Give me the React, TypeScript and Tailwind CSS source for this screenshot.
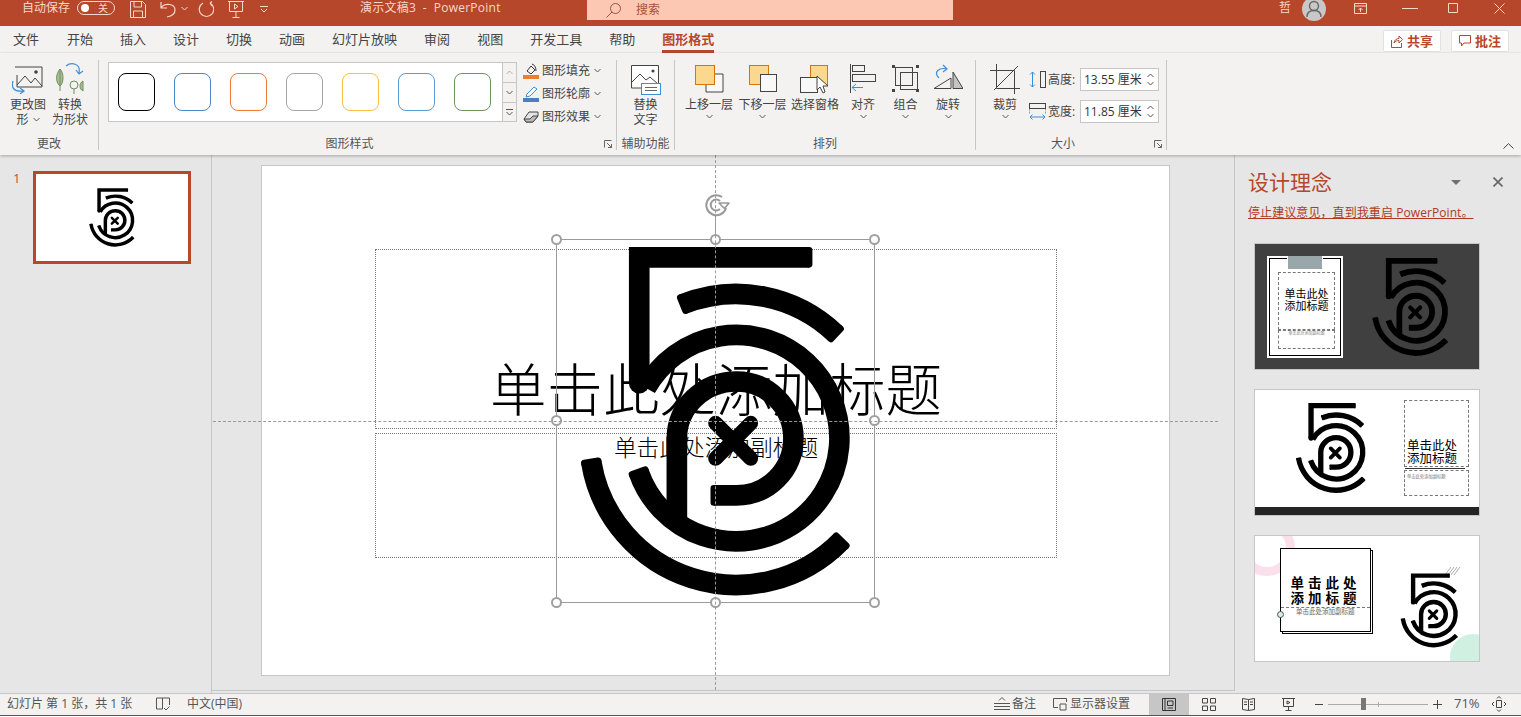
import type { ReactNode } from 'react';

const CX = 589;
const CY = 745;
const HALF = 31; // half stroke of the logo
const R = 10; // corner radius at the stroke ends

const polar = (r: number, deg: number) => {
  const a = (deg * Math.PI) / 180;
  return `${(CX + r * Math.cos(a)).toFixed(1)} ${(CY + r * Math.sin(a)).toFixed(1)}`;
};

function arc(r: number, a0: number, a1: number, trimStart: number, trimEnd: number) {
  const s = a0 + (trimStart / r) * (180 / Math.PI);
  const e = a1 - (trimEnd / r) * (180 / Math.PI);
  return `M${polar(r, s)} A${r} ${r} 0 ${e - s > 180 ? 1 : 0} 1 ${polar(r, e)}`;
}

// short radial line with round caps, squares the stroke end off with soft corners
function tip(r: number, a: number, inward: number) {
  const d = a + (inward / r) * (180 / Math.PI);
  return `M${polar(r - HALF + R, d)} L${polar(r + HALF - R, d)}`;
}

function Logo({ className }: { className?: string }) {
  return (
    <svg viewBox="100 150 860 1090" className={className} fill="none" stroke="currentColor">
      <g strokeWidth="62">
        <path d={`M${818 - R} 202 H298 V580`} />
        <path d={`M411 990 V745 A179 171 0 0 1 590 575 A171 171 0 0 1 590 917 L${512 + R} 917`} />
        <path d={arc(433, -113, -45, R, R)} />
        <path d={arc(310, -151, 162.7, 0, R)} />
        <path d={arc(441, 43, 172, R, R)} />
      </g>
      <g strokeWidth={R * 2} strokeLinecap="round">
        <path d={`M${818 - R} ${202 - HALF + R} V${202 + HALF - R}`} />
        <path d={`M${512 + R} ${917 - HALF + R} V${917 + HALF - R}`} />
        <path d={tip(433, -113, R)} />
        <path d={tip(433, -45, -R)} />
        <path d={tip(310, 162.7, -R)} />
        <path d={tip(441, 43, R)} />
        <path d={tip(441, 172, -R)} />
      </g>
      <circle cx="298" cy="580" r="31" fill="currentColor" stroke="none" />
      <path d="M527 700 L633 806 M633 700 L527 806" strokeWidth="44" strokeLinecap="round" />
    </svg>
  );
}

function Chevron({ className = '' }: { className?: string }) {
  return (
    <svg width="7" height="5" viewBox="0 0 7 5" className={className} fill="none" stroke="#555" strokeWidth="1">
      <path d="M0.5 1 L3.5 4 L6.5 1" />
    </svg>
  );
}

function Launcher({ className = '' }: { className?: string }) {
  return (
    <svg width="8" height="8" viewBox="0 0 8 8" className={className} fill="none" stroke="#666" strokeWidth="1">
      <path d="M0.5 7.5 V0.5 H7.5 M3 3 L7.5 7.5 M7.5 4 V7.5 H4" />
    </svg>
  );
}

function TitleBar() {
  return (
    <div className="flex h-[26px] shrink-0 items-start overflow-hidden bg-[#b7472a] text-[12px] leading-[16px] text-[#f6d8cd]">
      <span className="ml-[22px] w-[48px] whitespace-nowrap">自动保存</span>
      <div className="ml-[7px] mt-[1px] flex h-[14px] w-[38px] items-center justify-between rounded-full border border-[#f6d8cd] pl-[3px] pr-[6px]">
        <span className="h-[8px] w-[8px] rounded-full bg-white" />
        <span className="text-[10px] leading-none">关</span>
      </div>
      <svg width="16" height="17" viewBox="0 0 16 17" className="ml-[15px] mt-[1px]" fill="none" stroke="#f6d8cd">
        <path d="M0.5 0.5 H12.5 L15.5 3.5 V16.5 H0.5 Z M4 0.5 V6 H11.5 V0.5 M3.5 16.5 V10 H12.5 V16.5" />
      </svg>
      <svg width="16" height="17" viewBox="0 0 16 17" className="ml-[14px] mt-[1px]" fill="none" stroke="#f6d8cd" strokeWidth="1.2">
        <path d="M1 1 V7 H7 M1 7 C4 2 15 2 15 9 C15 12 12 15 7 16" />
      </svg>
      <Chevron className="ml-[5px] mt-[6px] [&>path]:stroke-[#f6d8cd]" />
      <svg width="16" height="17" viewBox="0 0 16 17" className="ml-[10px] mt-[1px]" fill="none" stroke="#f6d8cd" strokeWidth="1.2">
        <path d="M12 2 A7.2 7.2 0 1 1 5 2 M12 2 L14 0.5 M12 2 L14 5" />
      </svg>
      <svg width="16" height="17" viewBox="0 0 16 17" className="ml-[14px] mt-[1px]" fill="none" stroke="#f6d8cd">
        <path d="M0 0.5 H16 M1.5 0.5 V10.5 H14.5 V0.5 M8 10.5 V16 M4.5 16.5 H11.5" />
        <path d="M6.5 3 L10 5.5 L6.5 8 Z" />
      </svg>
      <svg width="8" height="7" viewBox="0 0 8 7" className="ml-[16px] mt-[6px]" fill="none" stroke="#f6d8cd">
        <path d="M0 0.5 H8 M1 3 L4 6 L7 3" />
      </svg>
      <span className="ml-[92px] w-[141px] whitespace-pre tracking-[0.25px]">演示文稿3  -  PowerPoint</span>
      <div className="ml-[86px] flex h-[20px] w-[366px] items-center bg-[#fcc8b4] text-[#a5503a]">
        <svg width="15" height="15" viewBox="0 0 15 15" className="ml-[19px]" fill="none" stroke="#a5503a">
          <circle cx="9.5" cy="5.5" r="5" />
          <path d="M6 9 L0.5 14.5" />
        </svg>
        <span className="ml-[15px]">搜索</span>
      </div>
      <span className="ml-[326px] w-[12px]">哲</span>
      <div className="ml-[11px] -mt-[3px] flex h-[24px] w-[24px] items-center justify-center rounded-full bg-[#c8c8c8]">
        <svg width="16" height="18" viewBox="0 0 16 18" fill="none" stroke="#666" strokeWidth="1.4">
          <circle cx="8" cy="6" r="4.5" />
          <path d="M1 17 C1 12 4 10.5 8 10.5 C12 10.5 15 12 15 17" />
        </svg>
      </div>
      <svg width="13" height="11" viewBox="0 0 13 11" className="ml-[28px] mt-[3px]" fill="none" stroke="#f6d8cd">
        <path d="M0.5 0.5 H12.5 V10.5 H0.5 Z M0.5 3 H12.5 M6.5 9 V5 M4.5 7 L6.5 5 L8.5 7" />
      </svg>
      <svg width="16" height="1" viewBox="0 0 16 1" className="ml-[35px] mt-[8px]" stroke="#f6d8cd">
        <path d="M0 0.5 H16" />
      </svg>
      <svg width="10" height="10" viewBox="0 0 10 10" className="ml-[30px] mt-[3px]" fill="none" stroke="#f6d8cd">
        <path d="M0.5 0.5 H9.5 V9.5 H0.5 Z" />
      </svg>
      <svg width="11" height="11" viewBox="0 0 11 11" className="ml-[36px] mt-[3px]" fill="none" stroke="#f6d8cd">
        <path d="M0.5 0.5 L10.5 10.5 M10.5 0.5 L0.5 10.5" />
      </svg>
    </div>
  );
}

const tabs = ['文件', '开始', '插入', '设计', '切换', '动画', '幻灯片放映', '审阅', '视图', '开发工具', '帮助'];

function TabRow() {
  return (
    <div className="flex h-[27px] shrink-0 items-start justify-between bg-[#f3f2f1] pl-[13px] pr-[12px] text-[13px] leading-[21px] text-[#444]">
      <div className="flex gap-[27px]">
        {tabs.map((t, i) => (
          <span key={t} className={`h-[27px] whitespace-nowrap border-b-[3px] border-transparent pt-[3px] ${i === 0 ? 'mr-px' : ''}`}>
            {t}
          </span>
        ))}
        <span className="h-[27px] whitespace-nowrap border-b-[3px] border-[#b7472a] pt-[3px] font-bold text-[#b7472a]">图形格式</span>
      </div>
      <div className="mt-[4px] flex gap-[10px] text-[13px] font-bold text-[#b7472a]">
        <button className="flex h-[22px] w-[58px] items-center justify-center gap-[4px] rounded-[2px] border border-[#e4e2e0] bg-white">
          <svg width="12" height="13" viewBox="0 0 12 13" fill="none" stroke="#b7472a">
            <path d="M0.5 5 V12.5 H10.5 V8 M3 8 C3 5 6 3.5 8 3.5 V1 L11.5 4.5 L8 8 V5.5 C6 5.5 4.5 6 3 8 Z" />
          </svg>
          共享
        </button>
        <button className="flex h-[22px] w-[58px] items-center justify-center gap-[4px] rounded-[2px] border border-[#e4e2e0] bg-white">
          <svg width="12" height="12" viewBox="0 0 12 12" fill="none" stroke="#b7472a">
            <path d="M0.5 0.5 H11.5 V8 H5 L2.5 11 V8 H0.5 Z" />
          </svg>
          批注
        </button>
      </div>
    </div>
  );
}

function Group({ width, label, children, launcher }: { width: string; label: string; children: ReactNode; launcher?: boolean }) {
  return (
    <div className={`relative flex h-[90px] shrink-0 flex-col border-r border-[#c6c6c6] ${width}`}>
      <div className="flex flex-1">{children}</div>
      <div className={`h-[18px] pt-[4px] text-center text-[12px] leading-[15px] text-[#555] ${launcher ? 'pr-[16px]' : ''}`}>{label}</div>
      {launcher && <Launcher className="absolute bottom-[2px] right-[4px]" />}
    </div>
  );
}

function RibbonButton({ width, icon, lines, caret }: { width: string; icon: ReactNode; lines: ReactNode[]; caret?: boolean }) {
  return (
    <div className={`flex shrink-0 flex-col items-center text-[12px] leading-[15px] text-[#444] ${width}`}>
      <div className="flex h-[37px] items-center justify-center">{icon}</div>
      {lines.map((l, i) => (
        <span key={i} className="flex items-center whitespace-nowrap">
          {l}
        </span>
      ))}
      {caret && <Chevron className="mt-[2px]" />}
    </div>
  );
}

const swatches = [
  'border-black',
  'border-[#4a86c8]',
  'border-[#ed7d31]',
  'border-[#a5a5a5]',
  'border-[#fbbf40]',
  'border-[#5b9bd5]',
  'border-[#6f9460]',
];

function StyleCommand({ icon, label }: { icon: ReactNode; label: string }) {
  return (
    <div className="flex h-[23px] items-center text-[12px] text-[#444]">
      <span className="flex w-[19px] justify-start">{icon}</span>
      <span className="whitespace-nowrap">{label}</span>
      <Chevron className="ml-[4px]" />
    </div>
  );
}

function PairIcon({ under }: { under: boolean }) {
  const back = <path d="M15 10 H30 V28 H13 V10" fill="#f8f8f8" stroke="#444" />;
  const front = <rect x="2.5" y="1.5" width="19" height="19" fill="#fad98f" stroke="#d9730d" />;
  return (
    <svg width="32" height="30" viewBox="0 0 32 30">
      {under ? front : back}
      {under ? <rect x="13.5" y="10.5" width="16" height="17" fill="#f8f8f8" stroke="#444" /> : front}
    </svg>
  );
}

function Ribbon() {
  return (
    <div className="relative z-10 flex h-[102px] shrink-0 bg-[#f3f2f1] pt-[7px] shadow-[0_1px_3px_rgba(0,0,0,0.28)]">
      <Group width="w-[99px]" label="更改">
        <div className="flex pl-[7px]">
          <RibbonButton
            width="w-[42px]"
            lines={['更改图', <>形 <Chevron className="ml-[4px]" /></>]}
            icon={
              <svg width="32" height="28" viewBox="0 0 32 28" fill="none" className="mt-[2px]">
                <path d="M3 1 H30 V21 H5 V9" stroke="#444" />
                <path d="M5 19 L13 10 L19 17 L23 12 L30 20" stroke="#444" />
                <circle cx="24" cy="6" r="1.8" fill="#444" />
                <path d="M1 15 C-1 22 2 26 11 25 M8 22 L12 25 L8 28" stroke="#3b8fd9" strokeWidth="1.2" />
              </svg>
            }
          />
          <RibbonButton
            width="w-[42px]"
            lines={['转换', '为形状']}
            icon={
              <svg width="30" height="32" viewBox="0 0 30 32" fill="none">
                <path d="M5 6 C0 12 1 20 5 23 C9 20 9 10 5 6 Z M5 6 V28" stroke="#6f8f5c" fill="#a9bc9a" />
                <circle cx="19" cy="22" r="4" stroke="#6f8f5c" />
                <path d="M19 26 V31 M28 18 V28 C24 26 24 20 28 18 Z" stroke="#6f8f5c" fill="#a9bc9a" />
                <path d="M11 3 C16 -1 26 0 24 10 M21 7 L24 11 L28 8" stroke="#3b8fd9" strokeWidth="1.2" />
              </svg>
            }
          />
        </div>
      </Group>

      <Group width="w-[518px]" label="图形样式" launcher>
        <div className="ml-[9px] mt-[2px] flex h-[60px] w-[409px] border border-[#c6c6c6] bg-white">
          <div className="flex flex-1 gap-[19px] pl-[9px] pt-[10px]">
            {swatches.map(c => (
              <div key={c} className={`h-[38px] w-[37px] rounded-[8px] border ${c}`} />
            ))}
          </div>
          <div className="flex w-[14px] flex-col border-l border-[#c6c6c6] bg-[#f3f2f1]">
            <div className="flex h-[20px] items-center justify-center border-b border-[#c6c6c6]">
              <Chevron className="rotate-180 opacity-40" />
            </div>
            <div className="flex h-[20px] items-center justify-center border-b border-[#c6c6c6]">
              <Chevron />
            </div>
            <div className="flex flex-1 flex-col items-center justify-center">
              <span className="h-px w-[7px] bg-[#555]" />
              <Chevron className="mt-px" />
            </div>
          </div>
        </div>
        <div className="ml-[6px] -mt-[1px] flex flex-col">
          <StyleCommand
            label="图形填充"
            icon={
              <svg width="16" height="16" viewBox="0 0 16 16" fill="none">
                <path d="M4 8 L8 3 L12 7 L8 11 Z M9 1 C12 2 13 5 13 8" stroke="#333" />
                <rect y="12" width="16" height="4" fill="#ed7d31" />
              </svg>
            }
          />
          <StyleCommand
            label="图形轮廓"
            icon={
              <svg width="16" height="16" viewBox="0 0 16 16" fill="none">
                <path d="M3 11 L4 8 L11 1 L14 3 L7 10 Z" stroke="#3b8fd9" fill="#fff" />
                <rect y="12" width="16" height="4" fill="#4a7fc0" />
              </svg>
            }
          />
          <StyleCommand
            label="图形效果"
            icon={
              <svg width="16" height="14" viewBox="0 0 16 14" fill="none" stroke="#444">
                <path d="M1 9 L6 2 H15 L15 6 L10 12 H3 Z" fill="#e4e4e4" />
                <path d="M1 9 L3 12 H10 L15 6 L10 6 L7 9 Z" fill="#bbb" />
              </svg>
            }
          />
        </div>
      </Group>

      <Group width="w-[58px]" label="辅助功能">
        <RibbonButton
          width="w-full"
          lines={['替换', '文字']}
          icon={
            <svg width="30" height="30" viewBox="0 0 30 30" fill="none" className="mt-[3px]">
              <path d="M0.5 0.5 H27.5 V23 H0.5 Z" stroke="#444" fill="#fff" />
              <path d="M1 17 L9 9 L15 15 L19 12 L27 19" stroke="#444" />
              <circle cx="22" cy="6" r="1.6" fill="#444" />
              <rect x="10.5" y="18.5" width="19" height="11" fill="#fff" stroke="#3b8fd9" />
              <path d="M14 22.5 H26 M14 25.5 H26" stroke="#666" />
            </svg>
          }
        />
      </Group>

      <Group width="w-[301px]" label="排列">
        <div className="flex pl-[7px]">
          <RibbonButton width="w-[54px]" lines={['上移一层']} caret icon={<PairIcon under={false} />} />
          <RibbonButton width="w-[53px]" lines={['下移一层']} caret icon={<PairIcon under />} />
          <RibbonButton
            width="w-[52px]"
            lines={['选择窗格']}
            icon={
              <svg width="32" height="30" viewBox="0 0 32 30">
                <rect x="11.5" y="1.5" width="17" height="20" fill="#fad98f" stroke="#d9730d" />
                <rect x="1.5" y="13.5" width="17" height="15" fill="#f8f8f8" stroke="#444" />
                <path d="M18 12 V26 L21 23 L24 29 L26 28 L24 22 H29 Z" fill="#fff" stroke="#444" />
              </svg>
            }
          />
          <RibbonButton
            width="w-[44px]"
            lines={['对齐']}
            caret
            icon={
              <svg width="28" height="30" viewBox="0 0 28 30" fill="none" stroke="#444">
                <path d="M1.5 0 V29" />
                <rect x="3.5" y="1.5" width="12" height="6" />
                <rect x="3.5" y="10.5" width="23" height="7" />
                <path d="M14 23.5 H3 M7 20 L3 23.5 L7 27" stroke="#3b8fd9" />
              </svg>
            }
          />
          <RibbonButton
            width="w-[41px]"
            lines={['组合']}
            caret
            icon={
              <svg width="28" height="30" viewBox="0 0 28 30" fill="none" stroke="#444">
                <rect x="3.5" y="3.5" width="17" height="18" />
                <rect x="8.5" y="8.5" width="17" height="17" />
                <g fill="#444" stroke="none">
                  <rect x="0" y="1" width="3" height="3" />
                  <rect x="24" y="1" width="3" height="3" />
                  <rect x="0" y="25" width="3" height="3" />
                  <rect x="24" y="25" width="3" height="3" />
                </g>
              </svg>
            }
          />
          <RibbonButton
            width="w-[44px]"
            lines={['旋转']}
            caret
            icon={
              <svg width="30" height="30" viewBox="0 0 30 30" fill="none">
                <path d="M1 24.5 L18 14 V24.5 Z" stroke="#444" />
                <path d="M20 8 L30 24.5 H20 Z" fill="#c4c4c4" stroke="#444" />
                <path d="M6 14 C0 8 6 3 14 5 M10 1 L14 5 L10 8" stroke="#3b8fd9" strokeWidth="1.2" />
              </svg>
            }
          />
        </div>
      </Group>

      <Group width="w-[191px]" label="大小" launcher>
        <div className="flex pl-[7px]">
          <RibbonButton
            width="w-[44px]"
            lines={['裁剪']}
            caret
            icon={
              <svg width="30" height="30" viewBox="0 0 30 30" fill="none" stroke="#444">
                <path d="M6.5 0 V24.5 H30 M0 6.5 H24.5 V30 M4 26 L28 2" />
              </svg>
            }
          />
          <div className="ml-[2px] mt-[8px] flex flex-col gap-[9px]">
            <SizeRow
              label="高度:"
              value="13.55 厘米"
              icon={
                <svg width="17" height="17" viewBox="0 0 17 17" fill="none">
                  <rect x="11.5" y="0.5" width="5" height="16" stroke="#444" />
                  <path d="M3.5 1 V16 M1 3.5 L3.5 1 L6 3.5 M1 13.5 L3.5 16 L6 13.5" stroke="#3b8fd9" />
                </svg>
              }
            />
            <SizeRow
              label="宽度:"
              value="11.85 厘米"
              icon={
                <svg width="17" height="17" viewBox="0 0 17 17" fill="none">
                  <rect x="0.5" y="0.5" width="16" height="5" stroke="#444" />
                  <path d="M0 5.5 V11 M17 5.5 V11" stroke="#444" strokeDasharray="2 1" />
                  <path d="M1 14 H16 M3.5 11.5 L1 14 L3.5 16.5 M13.5 11.5 L16 14 L13.5 16.5" stroke="#3b8fd9" />
                </svg>
              }
            />
          </div>
        </div>
      </Group>

      <div className="flex h-[90px] flex-1 items-end justify-end pb-[1px] pr-[7px]">
        <svg width="11" height="6" viewBox="0 0 11 6" fill="none" stroke="#444">
          <path d="M0.5 5.5 L5.5 0.7 L10.5 5.5" />
        </svg>
      </div>
    </div>
  );
}

function SizeRow({ label, value, icon }: { label: string; value: string; icon: ReactNode }) {
  return (
    <div className="flex h-[23px] items-center text-[12px] text-[#444]">
      <span className="flex w-[19px] items-center">{icon}</span>
      <span className="w-[32px] whitespace-nowrap">{label}</span>
      <div className="flex h-[23px] w-[79px] items-center justify-between border border-[#c6c6c6] bg-white pl-[3px] pr-[4px] text-[#333]">
        <span className="whitespace-nowrap">{value}</span>
        <span className="flex flex-col gap-[3px]">
          <Chevron className="rotate-180" />
          <Chevron />
        </span>
      </div>
    </div>
  );
}

function ThumbPane() {
  return (
    <div className="flex w-[212px] shrink-0 border-r border-[#c6c6c6] pl-[13px] pt-[16px]">
      <span className="w-[20px] text-[13px] leading-[14px] text-[#c5502c]">1</span>
      <div className="flex h-[93px] w-[158px] items-center justify-center border-[3px] border-[#b7472a] bg-white">
        <Logo className="h-[61px] w-[48px] text-black" />
      </div>
    </div>
  );
}

const handles = [
  'left-[-6px] top-[-6px]',
  'left-[153px] top-[-6px]',
  'left-[312px] top-[-6px]',
  'left-[-6px] top-[175px]',
  'left-[312px] top-[175px]',
  'left-[-6px] top-[357px]',
  'left-[153px] top-[357px]',
  'left-[312px] top-[357px]',
];

function SlideCanvas() {
  return (
    <div className="relative h-[538px] min-w-0 flex-1">
      <div className="h-[536px] border-b border-r border-[#c6c6c6] pl-[49px] pt-[10px]">
        <div className="relative h-[511px] w-[909px] border border-[#c6c6c6] bg-white">
          <div className="absolute left-[113px] top-[83px] flex h-[180px] w-[682px] items-end justify-center whitespace-nowrap border border-dotted border-[#777] text-[56.5px] font-light leading-[76px] text-black">
            单击此处添加标题
          </div>
          <div className="absolute left-[113px] top-[267px] flex h-[125px] w-[682px] justify-center border border-dotted border-[#777] text-[22.7px] font-light leading-[28px] text-black">
            单击此处添加副标题
          </div>
          <Logo className="absolute left-[311px] top-[74px] h-[363px] w-[287px] text-black" />
          <div className="absolute left-[294px] top-[73px] h-[364px] w-[319px] border border-[#9a9a9a]">
            <span className="absolute left-[158px] top-[-24px] h-[24px] w-px bg-[#9a9a9a]" />
            {handles.map(h => (
              <span key={h} className={`absolute h-[11px] w-[11px] rounded-full border-2 border-[#a0a0a0] bg-white ${h}`} />
            ))}
            <svg width="26" height="24" viewBox="0 0 26 24" className="absolute left-[148px] top-[-47px]" fill="none" stroke="#9a9a9a" strokeWidth="2">
              <path d="M17 4 A10 10 0 1 0 21 15" />
              <path d="M15 8 A5.5 5.5 0 1 0 15 16" />
              <path d="M14 10 L24 10 L19.5 15.5 Z" fill="#fff" strokeWidth="1.6" strokeLinejoin="round" />
            </svg>
          </div>
        </div>
      </div>
      <span className="pointer-events-none absolute bottom-[3px] left-[503px] top-0 border-l border-dashed border-[#9a9a9a]" />
      <span className="pointer-events-none absolute left-px top-[266px] w-[1005px] border-t border-dashed border-[#9a9a9a]" />
    </div>
  );
}

function DesignThumb({ className = '', children }: { className?: string; children: ReactNode }) {
  return <div className={`relative h-[127px] w-[226px] overflow-hidden border border-[#c6c6c6] ${className}`}>{children}</div>;
}

function DesignPane() {
  return (
    <div className="flex w-[286px] shrink-0 flex-col pl-[13px]">
      <div className="mt-[13px] flex h-[28px] items-center">
        <span className="w-[203px] text-[21px] leading-[28px] text-[#b7472a]">设计理念</span>
        <span className="h-0 w-0 border-x-[5px] border-t-[5px] border-x-transparent border-t-[#707070]" />
        <svg width="10" height="10" viewBox="0 0 10 10" className="ml-[32px]" stroke="#666" strokeWidth="1.6">
          <path d="M0.5 0.5 L9.5 9.5 M9.5 0.5 L0.5 9.5" />
        </svg>
      </div>
      <a className="mt-[8px] w-[225px] whitespace-nowrap text-[12px] leading-[18px] tracking-[0.08px] text-[#b03a20] underline">
        停止建议意见，直到我重启 PowerPoint。
      </a>
      <div className="ml-[6px] mt-[21px] flex flex-col gap-[19px]">
        <DesignThumb className="bg-[#404040]">
          <div className="absolute left-[12px] top-[12px] h-[102px] w-[76px] border-[3px] border-white bg-white outline-1 -outline-offset-[3px] outline-black">
            <div className="absolute left-[17px] top-[-3px] h-[13px] w-[36px] border-x border-white bg-[#9aa7aa]" />
            <div className="absolute left-[8px] top-[13px] h-[58px] w-[57px] border border-dashed border-[#777] pt-[15px] text-center text-[11px] leading-[12px] text-black">
              单击此处
              <br />
              添加标题
            </div>
            <div className="absolute left-[8px] top-[71px] h-[19px] w-[57px] border border-dashed border-[#777] text-center text-[4px] leading-[6px] text-[#888]">
              单击此处添加副标题
            </div>
          </div>
          <Logo className="absolute left-[115px] top-[12px] h-[102px] w-[81px] text-black" />
        </DesignThumb>

        <DesignThumb className="bg-white">
          <Logo className="absolute left-[39px] top-[11px] h-[94px] w-[74px] text-black" />
          <div className="absolute left-[149px] top-[10px] h-[67px] w-[65px] border border-dashed border-[#777] pl-[2px] pt-[38px] text-[12.5px] leading-[13px] text-black">
            单击此处
            <br />
            添加标题
          </div>
          <div className="absolute left-[149px] top-[80px] h-[26px] w-[65px] border border-dashed border-[#777] pl-[2px] pt-[2px] text-[4.3px] leading-[6px] text-[#777]">
            单击此处添加副标题
          </div>
          <div className="absolute left-[150px] top-[78px] h-px w-[60px] bg-[#333]" />
          <div className="absolute inset-x-0 bottom-0 h-[8px] bg-[#252525]" />
        </DesignThumb>

        <DesignThumb className="bg-white">
          <span className="absolute left-[-16px] top-[-16px] h-[56px] w-[56px] rounded-full border-[9px] border-[#fbe0ec]" />
          <span className="absolute left-[195px] top-[98px] h-[46px] w-[46px] rounded-full bg-[#d0f1e1]" />
          <div className="absolute left-[27px] top-[14px] h-[84px] w-[91px] border border-black bg-white" />
          <div className="absolute left-[25px] top-[12px] flex h-[84px] w-[91px] flex-col items-center border border-black bg-white pt-[27px] text-[13.5px] font-bold leading-[15px] tracking-[4px] text-black">
            <span>单击此处</span>
            <span>添加标题</span>
            <span className="absolute inset-x-0 top-[1px] h-[58px] border-b border-dashed border-[#777]" />
            <span className="absolute left-[15px] top-[59px] whitespace-nowrap text-[6.5px] font-normal leading-[8px] tracking-normal text-[#666]">
              单击此处添加副标题
            </span>
          </div>
          <span className="absolute left-[22px] top-[75px] h-[7px] w-[7px] rounded-full border border-[#555] bg-[#d0f1e1]" />
          <svg width="16" height="8" viewBox="0 0 16 8" className="absolute left-[190px] top-[31px]" stroke="#888" strokeWidth="0.7">
            <path d="M0 8 L6 0 M3 8 L9 0 M6 8 L12 0 M9 8 L15 0" />
          </svg>
          <Logo className="absolute left-[144px] top-[36px] h-[77px] w-[61px] text-black" />
        </DesignThumb>
      </div>
    </div>
  );
}

function StatusIcon({ children, width = 14 }: { children: ReactNode; width?: number }) {
  return (
    <svg width={width} height="14" viewBox={`0 0 ${width} 14`} fill="none" stroke="#555">
      {children}
    </svg>
  );
}

function StatusBar() {
  return (
    <div className="flex h-[22px] shrink-0 items-center border-t border-[#c6c6c6] bg-[#f3f2f1] pb-px pl-[7px] text-[12px] text-[#555]">
      <span className="w-[130px] whitespace-nowrap">幻灯片 第 1 张，共 1 张</span>
      <span className="ml-[19px] flex">
        <StatusIcon>
          <path d="M0.5 1 H6.5 V12 H0.5 Z M6.5 1 H13.5 V8 M8 11 L10 13 L13.5 9.5" />
        </StatusIcon>
      </span>
      <span className="ml-[17px] w-[57px] whitespace-nowrap">中文(中国)</span>

      <span className="ml-[750px] flex w-[16px]">
        <StatusIcon width={16}>
          <path d="M0 9.5 H16 M0 12.5 H16 M0 6.5 H16 M5 3.5 L8 0.5 L11 3.5" />
        </StatusIcon>
      </span>
      <span className="ml-[2px] w-[24px] whitespace-nowrap">备注</span>
      <span className="ml-[17px] flex">
        <StatusIcon>
          <path d="M5 10.5 H0.5 V1.5 H13.5 V5 M7 7 L13 7 L13 13 L7 13 Z" />
        </StatusIcon>
      </span>
      <span className="ml-[3px] w-[60px] whitespace-nowrap">显示器设置</span>

      <span className="ml-[19px] flex h-[21px] w-[40px] items-center justify-center bg-[#c6c6c6]">
        <svg width="14" height="13" viewBox="0 0 14 13" fill="none" stroke="#333">
          <path d="M0.5 0.5 H13.5 V12.5 H0.5 Z M3 0.5 V12.5 M5.5 3 H11 V7.5 H5.5 Z M5.5 10 H11" />
        </svg>
      </span>
      <span className="flex w-[40px] justify-center">
        <svg width="14" height="13" viewBox="0 0 14 13" fill="none" stroke="#444">
          <path d="M0.5 0.5 H5.5 V5 H0.5 Z M8.5 0.5 H13.5 V5 H8.5 Z M0.5 8 H5.5 V12.5 H0.5 Z M8.5 8 H13.5 V12.5 H8.5 Z" />
        </svg>
      </span>
      <span className="flex w-[39px] justify-center">
        <svg width="13" height="13" viewBox="0 0 13 13" fill="none" stroke="#444">
          <path d="M6.5 1.5 L0.5 0.5 V11.5 L6.5 12.5 L12.5 11.5 V0.5 Z M6.5 1.5 V12.5 M2 4 H5 M2 6.5 H5 M8 4 H11 M8 6.5 H11" />
        </svg>
      </span>
      <span className="flex w-[40px] justify-center">
        <svg width="13" height="13" viewBox="0 0 13 13" fill="none" stroke="#444">
          <path d="M0 0.5 H13 M1.5 0.5 V8.5 H11.5 V0.5 M6.5 8.5 V12 M3.5 12.5 H9.5 M5 3 L8 4.5 L5 6 Z" />
        </svg>
      </span>

      <span className="ml-[7px] h-px w-[8px] bg-[#444]" />
      <div className="relative ml-[5px] flex h-[12px] w-[100px] items-center">
        <span className="h-px w-full bg-[#aaa]" />
        <span className="absolute left-[50px] h-[5px] w-px bg-[#aaa]" />
        <span className="absolute left-[33px] h-[12px] w-[5px] bg-[#777]" />
      </div>
      <span className="relative ml-[5px] h-[9px] w-[9px]">
        <span className="absolute left-0 top-[4px] h-px w-[9px] bg-[#444]" />
        <span className="absolute left-[4px] top-0 h-[9px] w-px bg-[#444]" />
      </span>
      <span className="ml-[12px] w-[25px] whitespace-nowrap text-[13px]">71%</span>
      <span className="ml-[12px] flex">
        <svg width="16" height="16" viewBox="0 0 16 16" fill="none" stroke="#444">
          <path d="M5.5 4.5 H10.5 V11.5 H5.5 Z M6 2.5 L8 0.5 L10 2.5 M6 13.5 L8 15.5 L10 13.5 M3 6 L1 8 L3 10 M13 6 L15 8 L13 10" />
        </svg>
      </span>
    </div>
  );
}

export default function App() {
  return (
    <div className="flex h-[717px] w-[1521px] flex-col overflow-hidden bg-[#e6e6e6] font-['Open_Sans','Noto_Sans_CJK_SC',sans-serif]">
      <TitleBar />
      <TabRow />
      <Ribbon />
      <div className="flex h-[538px] shrink-0">
        <ThumbPane />
        <SlideCanvas />
        <DesignPane />
      </div>
      <StatusBar />
      <div className="flex-1 border-t border-[#555] bg-white" />
    </div>
  );
}
